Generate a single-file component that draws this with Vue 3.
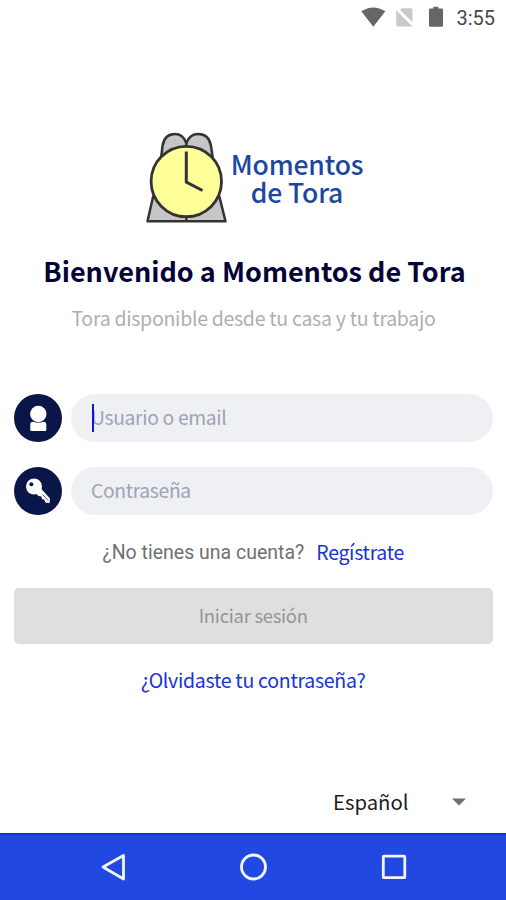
<script setup>
import { ref } from 'vue'

const user = ref('')
const password = ref('')
</script>

<template>
  <div class="screen">
    <header class="status">
      <svg class="status-icons" width="90" height="36" viewBox="0 0 90 36">
        <path d="M.3 11.300Q12.300 3.500 24.300 11.300L12.300 26.800Z" fill="#666" />
        <path d="M41 8.200H50q1.500 0 1.500 1.500V22.300L39 9.800zM35.200 10.200L51.500 26.500H36.700q-1.500 0-1.500-1.500z" fill="#c9c9c9" />
        <path d="M72.300 6.800h5v1.800h3.700q1 0 1 1V25.700q0 1-1 1H69q-1 0-1-1V9.600q0-1 1-1h3.300z" fill="#666" />
      </svg>
      <span class="clock">3:55</span>
    </header>

    <section class="brand">
      <svg width="84" height="96" viewBox="0 0 84 96">
        <g fill="#c6c6c6" stroke="#333" stroke-width="2.500" stroke-linejoin="round">
          <path d="M15.500 34L17.500 17Q19.500 5 30 5Q38 5 41.300 14Q45 5 53 5Q64 5 66 17L68.500 34" />
          <path d="M8 68L2.500 92.300H80.500L74.500 68Q41 88 8 68z" />
          <path d="M41.300 84v8M41.300 13v6" />
        </g>
        <circle cx="41.300" cy="52.500" r="35.200" fill="#ffff99" stroke="#333" stroke-width="2.800" />
        <path d="M41.300 22.500V53L57.500 61.500" fill="none" stroke="#333" stroke-width="3" />
      </svg>
      <div class="brand-name"><span>Momentos</span><span>de Tora</span></div>
    </section>

    <h1>Bienvenido a Momentos de Tora</h1>
    <p class="subtitle">Tora disponible desde tu casa y tu trabajo</p>

    <form class="login" @submit.prevent>
      <label class="field">
        <span class="badge">
          <svg width="48" height="48" viewBox="0 0 48 48" fill="#fff">
            <circle cx="24.300" cy="20" r="8.200" />
            <path d="M16.300 30.500Q16.300 27.700 19 27.700Q24.300 30 29.500 27.700Q32.300 27.700 32.300 30.500V36q0 1-1 1H17.300q-1 0-1-1z" />
          </svg>
        </span>
        <span class="input-wrap">
          <input v-model="user" type="text" placeholder="Usuario o email">
          <i class="caret"></i>
        </span>
      </label>
      <label class="field">
        <span class="badge">
          <svg width="48" height="48" viewBox="0 0 48 48">
            <circle cx="20" cy="19.500" r="8" fill="#fff" />
            <path d="M22 26.500L27 21.500L36 31.500L35.500 36.300L31.300 35.500L30.300 32.800L27.800 32L27.500 29.500L24.500 29Z" fill="#fff" />
            <path d="M28.500 27.500L34 33.300" stroke="#0a1648" stroke-width=".7" />
            <circle cx="17.400" cy="17.300" r="2" fill="#0a1648" />
          </svg>
        </span>
        <span class="input-wrap">
          <input v-model="password" type="password" placeholder="Contraseña">
        </span>
      </label>
      <p class="signup"><span>¿No tienes una cuenta?</span><a>Regístrate</a></p>
      <button type="submit" disabled>Iniciar sesión</button>
    </form>

    <a class="forgot">¿Olvidaste tu contraseña?</a>

    <div class="language">
      <span>Español</span>
      <svg width="14" height="8" viewBox="0 0 14 8"><path d="M0 .5H14L7 7.500Z" fill="#707070" /></svg>
    </div>

    <nav class="navbar">
      <svg width="28" height="30" viewBox="0 0 28 30"><path d="M3 14L23.500 2.500V26Z" /></svg>
      <svg width="28" height="30" viewBox="0 0 28 30"><circle cx="13.500" cy="14" r="12" /></svg>
      <svg width="28" height="30" viewBox="0 0 28 30"><rect x="3.300" y="3.200" width="21.500" height="21.500" rx=".8" /></svg>
    </nav>
  </div>
</template>

<style>
body {
  margin: 0;
  background: #fff;
}
</style>

<style scoped>
.screen {
  width: 506px;
  height: 900px;
  display: flex;
  flex-direction: column;
  background: #fff;
  font-family: "Noto Sans CJK SC", "Noto Sans", sans-serif;
  overflow: hidden;
}
.status {
  height: 36px;
  display: flex;
  justify-content: flex-end;
  padding-right: 11px;
  gap: 5px;
}
.clock {
  font: 20px/37px Roboto, sans-serif;
  color: #484848;
}
.brand {
  height: 96px;
  margin-top: 93px;
  padding-left: 145px;
  display: flex;
  gap: 1px;
}
.brand-name {
  display: flex;
  flex-direction: column;
  width: 134px;
  padding-top: 21px;
  text-align: center;
  white-space: nowrap;
  font-weight: 500;
  font-size: 26.5px;
  letter-spacing: -0.15px;
  line-height: 28px;
  color: #1d479e;
}
h1 {
  margin: 26px 0 0;
  padding-left: 3px;
  height: 40px;
  line-height: 40px;
  font-size: 27px;
  font-weight: 700;
  text-align: center;
  white-space: nowrap;
  color: #030338;
}
.subtitle {
  margin: 12px 0 0;
  padding-left: 1px;
  height: 30px;
  line-height: 30px;
  font-size: 19.5px;
  letter-spacing: -0.29px;
  text-align: center;
  color: #abafb5;
}
.login {
  margin-top: 61px;
  padding: 0 13.5px 0 14px;
  display: flex;
  flex-direction: column;
}
.field {
  display: flex;
  gap: 9px;
  height: 48px;
  margin-bottom: 25px;
}
.badge {
  width: 48px;
  height: 48px;
  border-radius: 50%;
  background: #0a1648;
}
.input-wrap {
  flex: 1;
  position: relative;
  display: flex;
}
input {
  box-sizing: border-box;
  width: 100%;
  height: 48px;
  padding: 0 20px 2px;
  border: 0;
  border-radius: 24px;
  outline: 0;
  background: #eef0f4;
  font-family: inherit;
  font-size: 19.3px;
  letter-spacing: -0.33px;
}
input::placeholder {
  color: #9ea3b5;
  opacity: 1;
}
.caret {
  position: absolute;
  left: 21px;
  top: 10px;
  width: 2px;
  height: 28px;
  background: #1515d0;
}
.signup {
  margin: -3px 0 0;
  height: 51px;
  display: flex;
  justify-content: center;
  gap: 12px;
  font-size: 19.5px;
  line-height: 29px;
}
.signup span {
  font-family: Roboto, sans-serif;
  color: #707070;
  line-height: 31px;
}
.signup a {
  letter-spacing: -0.3px;
}
.signup a,
.forgot {
  color: #1733d6;
}
button {
  height: 56px;
  padding: 0 0 3px;
  border: 0;
  border-radius: 5px;
  background: #dfdfdf;
  font-family: inherit;
  font-size: 18.5px;
  letter-spacing: -0.3px;
  color: #959595;
}
.forgot {
  margin-top: 21px;
  height: 30px;
  line-height: 30px;
  font-size: 19.5px;
  letter-spacing: -0.28px;
  text-align: center;
}
.language {
  margin-top: auto;
  height: 50px;
  padding: 0 40px 6px 333px;
  display: flex;
  align-items: center;
  justify-content: space-between;
  font-size: 20.3px;
  line-height: 30px;
  color: #1c1c1c;
}
.language span {
  padding-bottom: 3px;
}
.navbar {
  box-sizing: border-box;
  height: 67px;
  border-top: 2px solid #1231d4;
  background: #2148e0;
  display: flex;
  align-items: center;
  justify-content: center;
  gap: 112px;
  padding-left: 1px;
}
.navbar svg {
  fill: none;
  stroke: #f2f5ff;
  stroke-width: 2.800;
  stroke-linejoin: round;
}
</style>
